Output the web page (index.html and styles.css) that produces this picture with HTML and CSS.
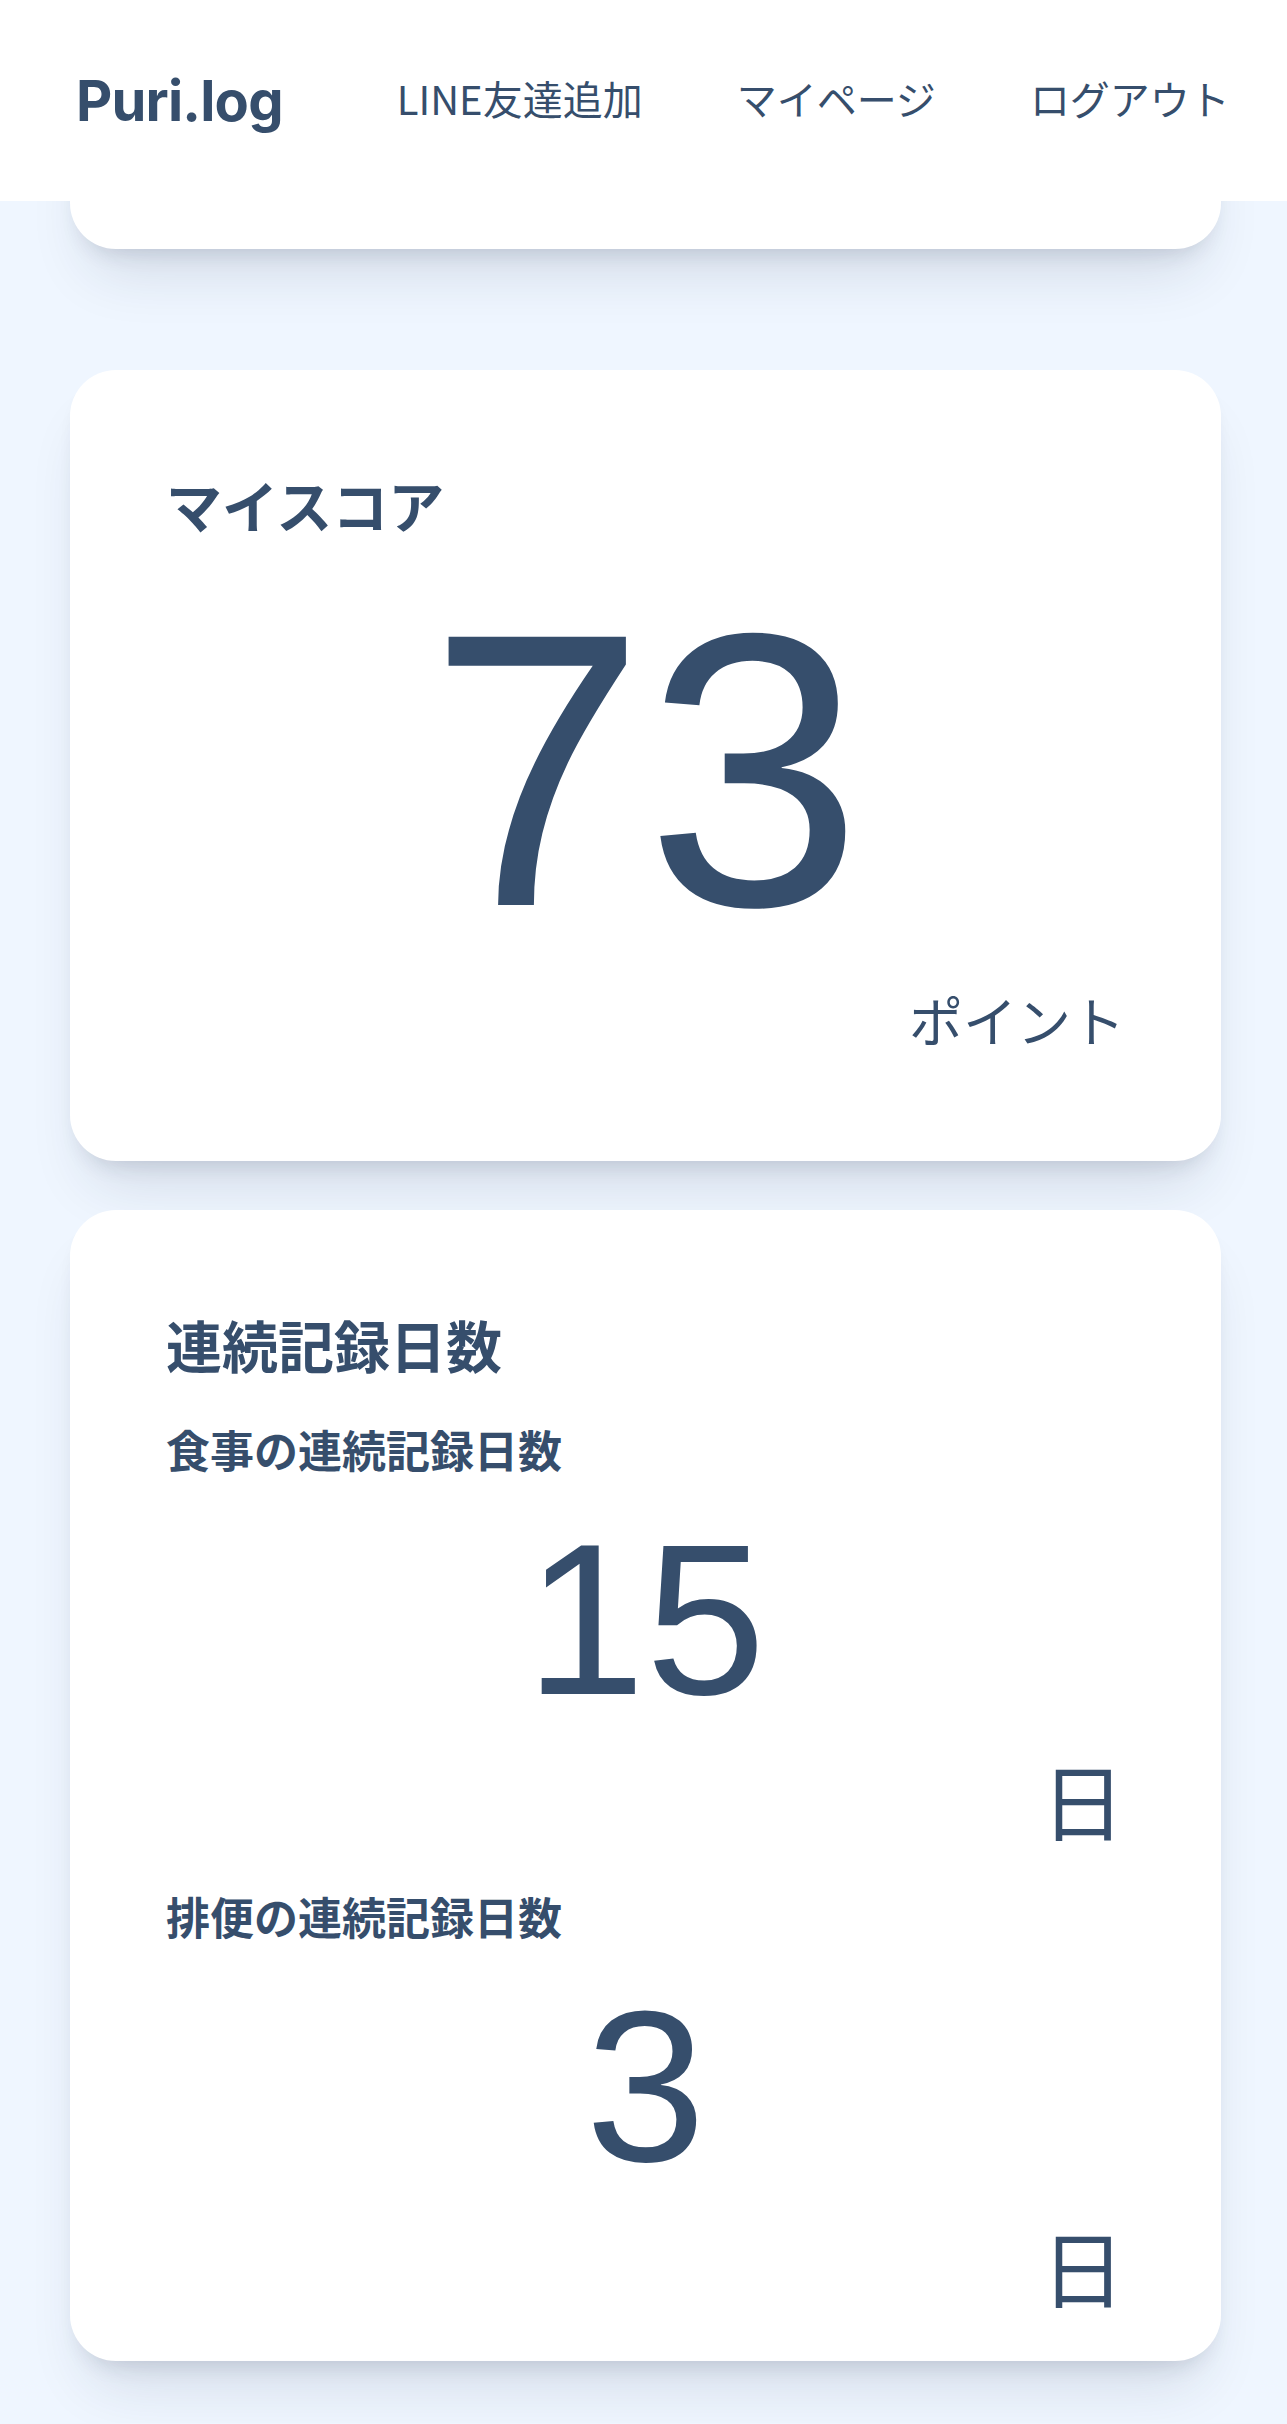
FILE: index.html
```html
<!DOCTYPE html>
<html lang="ja">
<head>
<meta charset="utf-8">
<title>Puri.log</title>
<link rel="stylesheet" href="styles.css">
</head>
<body>
<header class="site-header">
  <a class="logo" href="#">Puri.log</a>
  <nav class="nav">
    <a class="nav-link" href="#">LINE友達追加</a>
    <a class="nav-link" href="#">マイページ</a>
    <a class="nav-link" href="#">ログアウト</a>
  </nav>
</header>

<main class="main">
  <section class="card card-top"></section>

  <section class="card card-score">
    <h2 class="card-title">マイスコア</h2>
    <div class="score-value">73</div>
    <div class="score-unit">ポイント</div>
  </section>

  <section class="card card-streak">
    <h2 class="card-title">連続記録日数</h2>
    <div class="streak">
      <h3 class="streak-label">食事の連続記録日数</h3>
      <div class="streak-value">15</div>
      <div class="streak-unit">日</div>
    </div>
    <div class="streak">
      <h3 class="streak-label">排便の連続記録日数</h3>
      <div class="streak-value">3</div>
      <div class="streak-unit">日</div>
    </div>
  </section>
</main>
</body>
</html>
```

FILE: styles.css
```css
* {
  box-sizing: border-box;
}

html, body {
  margin: 0;
  padding: 0;
}

body {
  background: #eff6ff;
  color: #364e6c;
  font-family: "Noto Sans CJK JP", "Noto Sans", sans-serif;
}

.site-header {
  position: fixed;
  top: 0;
  left: 0;
  right: 0;
  height: 201px;
  background: #ffffff;
  display: flex;
  align-items: center;
  padding-left: 76px;
  z-index: 10;
}

.logo {
  font-family: Inter, "Noto Sans", sans-serif;
  font-weight: 700;
  font-size: 56px;
  color: #364e6c;
  text-decoration: none;
  letter-spacing: -0.8px;
}

.nav {
  display: flex;
  gap: 94px;
  margin-left: 114px;
  margin-bottom: 6px;
}

.nav-link {
  font-size: 40px;
  font-weight: 400;
  color: #364e6c;
  text-decoration: none;
  line-height: 60px;
}

.main {
  padding: 99px 66px 62px 70px;
  display: flex;
  flex-direction: column;
}

.card {
  background: #ffffff;
  border-radius: 46px;
  box-shadow: 0 40px 60px -20px rgba(30, 45, 70, 0.14), 0 14px 22px -12px rgba(30, 45, 70, 0.16);
  padding: 92px 96px 0;
}

.card-top {
  height: 150px;
  padding: 0;
}

.card-score {
  margin-top: 121px;
  padding-bottom: 101px;
}

.card-streak {
  margin-top: 49px;
  padding-bottom: 45px;
}

.card-title {
  margin: 0;
  font-size: 56px;
  font-weight: 700;
  line-height: 84px;
}

.score-value {
  margin-top: 29px;
  font-family: "Liberation Sans", Arial, sans-serif;
  font-size: 390px;
  line-height: 1;
  text-align: center;
}

.score-unit {
  margin-top: 14px;
  font-size: 54px;
  line-height: 81px;
  text-align: right;
}

.streak {
  margin-top: 30px;
}

.streak + .streak {
  margin-top: 34px;
}

.streak-label {
  margin: 0;
  font-size: 44px;
  font-weight: 700;
  line-height: 66px;
}

.streak-value {
  margin-top: 29px;
  font-family: "Liberation Sans", Arial, sans-serif;
  font-size: 216px;
  line-height: 1;
  text-align: center;
}

.streak-unit {
  margin-top: 22px;
  font-size: 84px;
  line-height: 100px;
  text-align: right;
}
```
